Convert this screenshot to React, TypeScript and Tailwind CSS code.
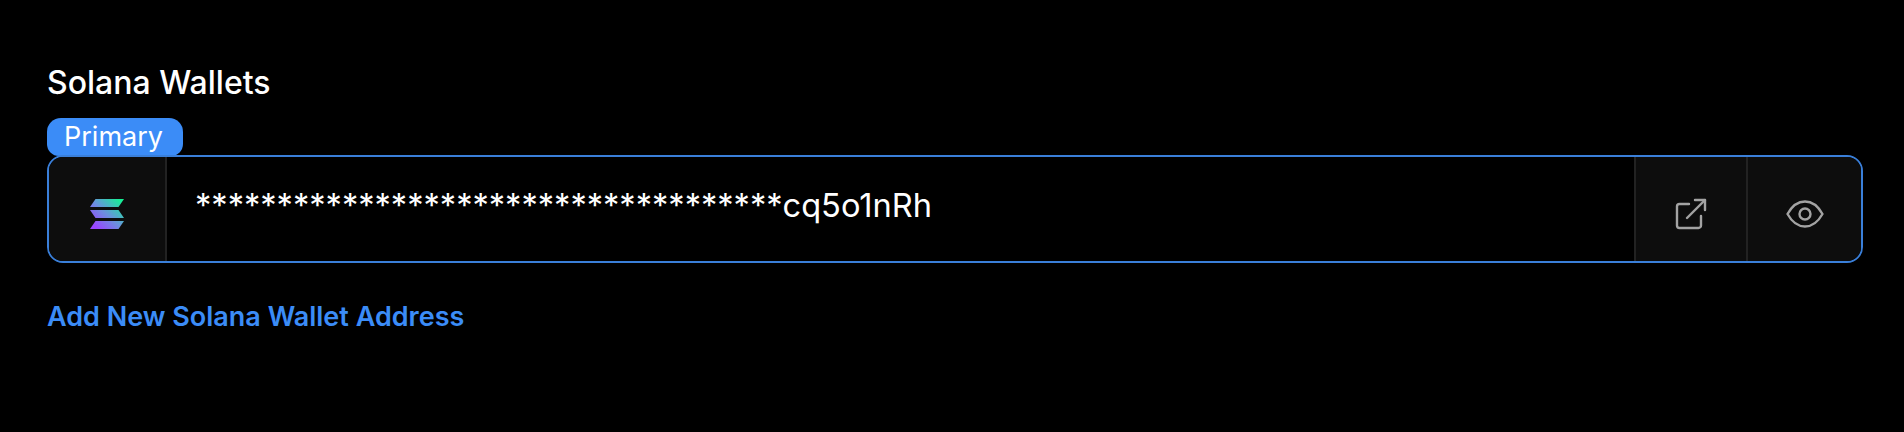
export default function App() {
  return (
    <div className="h-[432px] w-[1904px] overflow-hidden bg-black pl-[47px] pr-[41px] pt-[63px] font-['Inter',sans-serif]">
      <h2 className="text-[32px] font-medium leading-[40px] text-white">Solana Wallets</h2>
      <div className="mt-[15px] flex h-[38px] w-[136px] items-center justify-center rounded-t-[14px] rounded-b-[12px] bg-[#3b8cf7] pr-[3px] text-[27px] leading-[32px] text-white">
        Primary
      </div>
      <div className="-mt-px flex h-[108px] overflow-hidden rounded-[16px] border-2 border-[#3a7fd9] bg-black">
        <div className="flex w-[118px] items-center justify-center border-r-2 border-[#222222] bg-[#0d0d0d] pt-[9px]">
          <svg width="34" height="30" viewBox="0 0 34 30">
            <defs>
              <linearGradient id="sol" gradientUnits="userSpaceOnUse" x1="2" y1="30" x2="30" y2="0">
                <stop offset="0.1" stopColor="#9945ff" />
                <stop offset="0.5" stopColor="#6c8fe0" />
                <stop offset="1" stopColor="#14f195" />
              </linearGradient>
            </defs>
            <path d="M5.500 0H34L28.500 8H0Z" fill="url(#sol)" />
            <path d="M0 11H28.500L34 19H5.500Z" fill="url(#sol)" />
            <path d="M5.500 22H34L28.500 30H0Z" fill="url(#sol)" />
          </svg>
        </div>
        <div className="flex flex-1 items-center pb-[8px] pl-[28px] text-[32.600px] leading-[40px] text-white">
          ************************************cq5o1nRh
        </div>
        <div className="flex w-[112px] items-center justify-center border-l-2 border-[#222222] bg-[#0d0d0d] pt-[9px]">
          <svg width="32" height="32" viewBox="0 0 32 32" fill="none" stroke="#a3a3a3" strokeWidth="2.400" strokeLinecap="round" strokeLinejoin="round">
            <path d="M14 6H4.500A2.500 2.500 0 0 0 2 8.500V27.500A2.500 2.500 0 0 0 4.500 30H23.500A2.500 2.500 0 0 0 26 27.500V18" />
            <path d="M12 20L30 2" />
            <path d="M20 2H30V12" />
          </svg>
        </div>
        <div className="flex w-[115px] items-center justify-center border-l-2 border-[#222222] bg-[#0d0d0d] pt-[9px]">
          <svg width="38" height="28" viewBox="0 0 38 28" fill="none" stroke="#a3a3a3" strokeWidth="2.400">
            <path d="M1.500 14C6 6 12 1.500 19 1.500S32 6 36.500 14C32 22 26 26.500 19 26.500S6 22 1.500 14Z" strokeLinejoin="round" />
            <circle cx="19" cy="14" r="5.500" />
          </svg>
        </div>
      </div>
      <a className="mt-[38px] block text-[27px] font-semibold leading-[32px] text-[#3b8cf7]">
        Add New Solana Wallet Address
      </a>
    </div>
  );
}
